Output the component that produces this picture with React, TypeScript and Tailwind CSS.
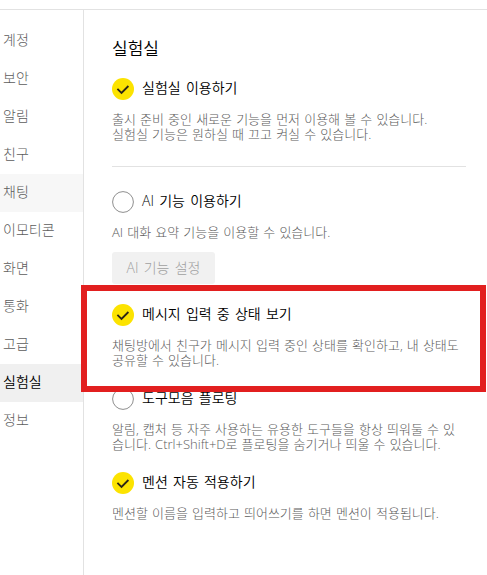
import clsx from "clsx";

const MENU = [
  "계정",
  "보안",
  "알림",
  "친구",
  "채팅",
  "이모티콘",
  "화면",
  "통화",
  "고급",
  "실험실",
  "정보",
];

type OptionProps = {
  label: string;
  description: string;
  checked?: boolean;
  className?: string;
};

const Check = ({ checked }: { checked?: boolean }) => (
  <svg viewBox="0 0 22 22" className="size-[22px] shrink-0" fill="none">
    {checked ? (
      <>
        <circle cx="11" cy="11" r="11" fill="#fce300" />
        <path d="M5.4 10.9 9.5 14.9 16.4 8" stroke="#2b2416" strokeWidth="1.8" />
      </>
    ) : (
      <circle cx="11" cy="11" r="10.4" fill="#fff" stroke="#8f8f8f" />
    )}
  </svg>
);

const Option = ({ label, description, checked, className }: OptionProps) => (
  <div className={className}>
    <div className="flex h-[22px] gap-2">
      <Check checked={checked} />
      <span className="text-[14px] leading-5 font-[350] text-black [word-spacing:1.6px]">
        {label}
      </span>
    </div>
    <p className="text-[13px] leading-[15px] whitespace-pre text-[#5c5c5c] [word-spacing:0.75px]">
      {description}
    </p>
  </div>
);

const Sidebar = () => (
  <nav className="w-[84px] shrink-0 border-r border-[#e2e2e2] pt-3">
    {MENU.map((item) => (
      <div
        key={item}
        className={clsx(
          "flex h-[38px] items-center pb-1 pl-[3px] text-[14px]",
          item === "실험실"
            ? "bg-[#f0f0f0] font-[350] text-black"
            : "text-[#5c5c5c]",
          item === "채팅" && "bg-[#f7f7f7]"
        )}
      >
        {item}
      </div>
    ))}
  </nav>
);

export default function App() {
  return (
    <div className="relative h-[575px] w-[487px] overflow-hidden bg-white pt-[9px] font-['Open_Sans','Noto_Sans_CJK_KR',sans-serif] font-light">
      <div className="flex h-full border-t border-[#e2e2e2]">
        <Sidebar />
        <main className="w-[382px] pl-7 pt-[26px]">
          <h1 className="h-[42px] text-[17px] leading-[25px] font-[350] text-black">
            실험실
          </h1>
          <Option
            checked
            label="실험실 이용하기"
            description={
              "출시 준비 중인 새로운 기능을 먼저 이용해 볼 수 있습니다.\n실험실 기능은 원하실 때 끄고 켜실 수 있습니다."
            }
            className="flex h-[89px] flex-col gap-3 border-b border-[#e2e2e2]"
          />
          <Option
            label="AI 기능 이용하기"
            description="AI 대화 요약 기능을 이용할 수 있습니다."
            className="flex flex-col gap-3 pt-6"
          />
          <button
            disabled
            className="mt-3 flex h-8 w-[103px] items-center justify-center rounded-[3px] bg-[#f1f1f1] pb-0.5 text-[14px] text-[#a0a0a0] [word-spacing:1.6px]"
          >
            AI 기능 설정
          </button>
          <Option
            checked
            label="메시지 입력 중 상태 보기"
            description={
              "채팅방에서 친구가 메시지 입력 중인 상태를 확인하고, 내 상태도\n공유할 수 있습니다."
            }
            className="mt-5 flex h-[84px] flex-col gap-3"
          />
          <Option
            label="도구모음 플로팅"
            description={
              "알림, 캡처 등 자주 사용하는 유용한 도구들을 항상 띄워둘 수 있\n습니다. Ctrl+Shift+D로 플로팅을 숨기거나 띄울 수 있습니다."
            }
            className="flex h-[84px] flex-col gap-3"
          />
          <Option
            checked
            label="멘션 자동 적용하기"
            description="멘션할 이름을 입력하고 띄어쓰기를 하면 멘션이 적용됩니다."
            className="flex flex-col gap-3"
          />
        </main>
      </div>
      {/* highlight frame over the typing status option */}
      <div className="absolute left-[81px] top-[285px] h-[107px] w-[405px] border-6 border-[#e21f1f]" />
    </div>
  );
}
